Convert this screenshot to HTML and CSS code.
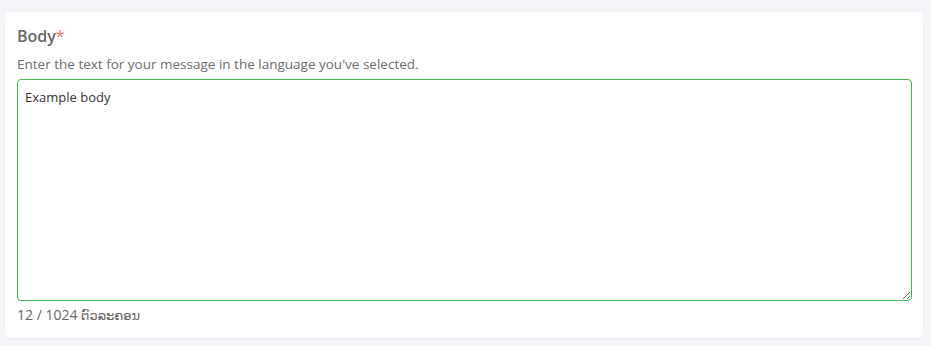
FILE: index.html
```html
<!DOCTYPE html>
<html lang="en">
<head>
  <meta charset="UTF-8">
  <meta name="viewport" content="width=device-width, initial-scale=1.0">
  <title>Message body</title>
  <link rel="stylesheet" href="styles.css">
</head>
<body>
  <div class="card">
    <label class="field-label" for="body">Body<span class="required">*</span></label>
    <p class="field-help">Enter the text for your message in the language you've selected.</p>
    <textarea id="body" class="field-input">Example body</textarea>
    <div class="field-counter">12 / 1024 <span lang="lo">ຕົວລະຄອນ</span></div>
  </div>
</body>
</html>
```

FILE: styles.css
```css
body {
  font-family: 'Open Sans', 'Noto Sans', 'DejaVu Sans', sans-serif;
  background-color: #f4f5f9;
  color: #666;
  margin: 0;
  padding: 12px 8px 8px 5px;
}
.card {
  background-color: white;
  border-radius: 5px;
  box-shadow: 0 1px 2px rgba(0, 0, 0, 0.06);
  padding: 13px 11px 11px 12px;
}
.field-label {
  display: block;
  font-size: 16px;
  font-weight: 600;
  color: #666;
  line-height: 22px;
}
.required {
  color: #f0756b;
  font-weight: 400;
}
.field-help {
  font-size: 13.5px;
  color: #6b6b6b;
  margin: 7px 0 5px 0;
  line-height: 20px;
}
.field-input {
  display: block;
  box-sizing: border-box;
  width: 100%;
  height: 222px;
  border: 1px solid #3dbb50;
  border-radius: 4px;
  padding: 8px 7px;
  font-family: inherit;
  font-size: 13px;
  color: #333;
  resize: vertical;
  outline: none;
}
.field-counter {
  font-size: 14px;
  color: #666;
  margin-top: 3px;
  line-height: 22px;
}
.field-counter span {
  font-family: 'DejaVu Sans', 'Noto Sans', sans-serif;
  font-size: 13px;
}
```
